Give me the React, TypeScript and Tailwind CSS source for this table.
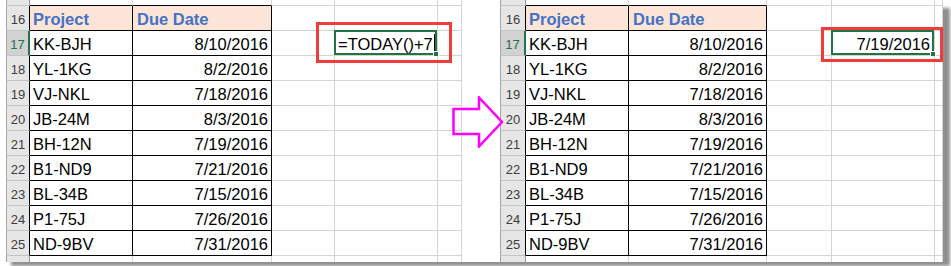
import React from "react";

// spreadsheet rows shown in both halves
const rows = [
  { n: 16, a: "Project", b: "Due Date", head: true },
  { n: 17, a: "KK-BJH", b: "8/10/2016" },
  { n: 18, a: "YL-1KG", b: "8/2/2016" },
  { n: 19, a: "VJ-NKL", b: "7/18/2016" },
  { n: 20, a: "JB-24M", b: "8/3/2016" },
  { n: 21, a: "BH-12N", b: "7/19/2016" },
  { n: 22, a: "B1-ND9", b: "7/21/2016" },
  { n: 23, a: "BL-34B", b: "7/15/2016" },
  { n: 24, a: "P1-75J", b: "7/26/2016" },
  { n: 25, a: "ND-9BV", b: "7/31/2016" },
];

type Widths = { hdr: string; a: string; b: string; c: string; d: string; e: string };

const LEFT: Widths = {
  hdr: "w-[24px]",
  a: "w-[103px]",
  b: "w-[139px]",
  c: "w-[63px]",
  d: "w-[103px]",
  e: "w-[24px]",
};

const RIGHT: Widths = {
  hdr: "w-[26px]",
  a: "w-[103px]",
  b: "w-[138px]",
  c: "w-[65px]",
  d: "w-[103px]",
  e: "w-[8px]",
};

const grid = "border-r border-b border-[#d4d4d4]";

function Sheet({ w, formula }: { w: Widths; formula: boolean }) {
  return (
    <div className="flex flex-col">
      {/* partial row above 16 */}
      <div className="flex h-[6px]">
        <div className={`${w.hdr} shrink-0 bg-[#e6e6e6] border-l border-l-[#a6a6a6] border-r border-r-[#9b9b9b] border-b border-b-[#c4c4c4]`} />
        <div className={`${w.a} shrink-0 border-r border-r-[#d4d4d4] border-b border-b-black`} />
        <div className={`${w.b} shrink-0 border-r border-r-[#d4d4d4] border-b border-b-black`} />
        <div className={`${w.c} shrink-0 ${grid}`} />
        <div className={`${w.d} shrink-0 ${grid}`} />
        <div className={`${w.e} shrink-0 ${grid}`} />
      </div>

      {rows.map((r) => {
        const active = r.n === 17;
        return (
          <div key={r.n} className="flex h-[25px]">
            <div
              className={`${w.hdr} shrink-0 border-l border-l-[#a6a6a6] border-b border-b-[#c4c4c4] pt-[3px] text-center text-[13px] leading-[21px] ${
                active
                  ? "bg-[#d2d2d2] text-[#217346] border-r-2 border-r-[#217346]"
                  : "bg-[#e6e6e6] text-[#3c3c3c] border-r border-r-black"
              }`}
            >
              {r.n}
            </div>
            <div
              className={`${w.a} shrink-0 border-r border-b border-black pl-[3px] pt-[3px] text-[16.5px] leading-[21px] whitespace-nowrap ${
                r.head ? "bg-[#fce4d6] font-bold text-[#4472c4]" : "text-black"
              }`}
            >
              {r.a}
            </div>
            <div
              className={`${w.b} shrink-0 border-r border-b border-black pt-[3px] text-[16.5px] leading-[21px] whitespace-nowrap ${
                r.head
                  ? "bg-[#fce4d6] font-bold text-[#4472c4] pl-[4px]"
                  : "text-black text-right pr-[3px]"
              }`}
            >
              {r.b}
            </div>
            <div className={`${w.c} shrink-0 ${grid}`} />
            <div className={`${w.d} shrink-0 ${grid} relative`}>
              {active && (
                <div className="absolute -left-[1px] -top-[1px] right-0 bottom-0 border-2 border-[#217346] pt-[2px] text-[16.5px] leading-[21px] text-black whitespace-nowrap">
                  {formula ? (
                    <div className="pl-[2px]">
                      <span className="relative">
                        =TODAY()+7
                        <span className="absolute left-full ml-[1px] -top-[1px] h-[23px] w-px bg-black" />
                      </span>
                    </div>
                  ) : (
                    <div className="text-right pr-[2px]">7/19/2016</div>
                  )}
                  <div className="absolute -right-[4px] -bottom-[4px] w-[6px] h-[6px] bg-[#217346] border border-white" />
                </div>
              )}
            </div>
            <div className={`${w.e} shrink-0 ${grid}`} />
          </div>
        );
      })}

      {/* partial row below 25 */}
      <div className="flex h-[6px]">
        <div className={`${w.hdr} shrink-0 bg-[#e6e6e6] border-l border-l-[#a6a6a6] border-r border-r-[#9b9b9b]`} />
        <div className={`${w.a} shrink-0 border-r border-r-[#d4d4d4]`} />
        <div className={`${w.b} shrink-0 border-r border-r-[#d4d4d4]`} />
        <div className={`${w.c} shrink-0 border-r border-r-[#d4d4d4]`} />
        <div className={`${w.d} shrink-0 border-r border-r-[#d4d4d4]`} />
        <div className={`${w.e} shrink-0 border-r border-r-[#d4d4d4]`} />
      </div>
    </div>
  );
}

export default function App() {
  return (
    <div className="w-[951px] h-[266px] bg-white overflow-hidden" style={{ fontFamily: '"Liberation Sans", Arial, sans-serif' }}>
      <div className="relative w-[943px] h-[262px] bg-white shadow-[9px_6px_3px_-2px_#8f8f8f] overflow-hidden flex">
        <div className="w-[6px] shrink-0" />
        <Sheet w={LEFT} formula={true} />
        <div className="w-[38px] shrink-0" />
        <Sheet w={RIGHT} formula={false} />

        {/* red highlight boxes */}
        <div className="absolute left-[316px] top-[22px] w-[136px] h-[41px] border-[3px] border-[#f23b3b]" />
        <div className="absolute left-[821px] top-[27px] w-[122px] h-[35px] border-[3px] border-[#f23b3b]" />

        {/* arrow */}
        <svg className="absolute left-[452px] top-[96px]" width="52" height="52" viewBox="0 0 52 52">
          <polygon
            points="1.5,13 27,13 27,1.5 50,26 27,50.5 27,38 1.5,38"
            fill="none"
            stroke="#ff00ff"
            strokeWidth="2.5"
          />
        </svg>
      </div>
    </div>
  );
}
